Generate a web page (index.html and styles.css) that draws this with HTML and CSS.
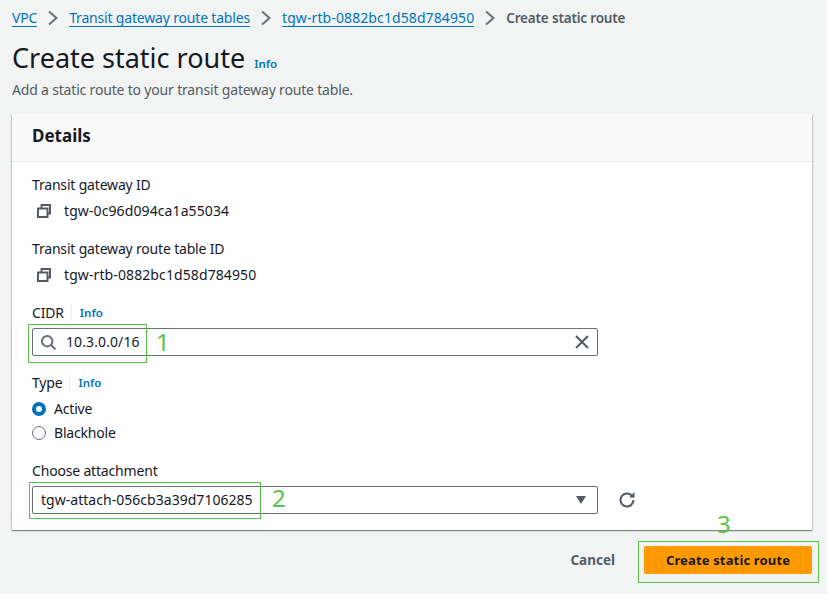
FILE: index.html
```html
<!DOCTYPE html>
<html lang="en">
<head>
    <meta charset="UTF-8">
    <meta name="viewport" content="width=device-width, initial-scale=1.0">
    <title>Create static route</title>
    <link rel="stylesheet" href="styles.css">
</head>
<body>
    <div class="page">
        <nav class="crumbs">
            <a href="#">VPC</a>
            <svg class="chevron" viewBox="0 0 10 16"><path d="M1 1.500l7.500 6.500-7.500 6.500"/></svg>
            <a href="#">Transit gateway route tables</a>
            <svg class="chevron" viewBox="0 0 10 16"><path d="M1 1.500l7.500 6.500-7.500 6.500"/></svg>
            <a class="res-id" href="#">tgw-rtb-0882bc1d58d784950</a>
            <svg class="chevron" viewBox="0 0 10 16"><path d="M1 1.500l7.500 6.500-7.500 6.500"/></svg>
            <span class="crumb-current">Create static route</span>
        </nav>

        <div class="title-row">
            <h1>Create static route</h1>
            <a class="info" href="#">Info</a>
        </div>
        <p class="subtitle">Add a static route to your transit gateway route table.</p>

        <section class="card">
            <h2 class="card-head">Details</h2>
            <div class="card-body">
                <div class="label">Transit gateway ID</div>
                <div class="copy-row">
                    <svg class="copy-icon" viewBox="0 0 14 14"><path d="M4.500 3.500V1h8.500v8.500h-2.500M1 4.500h9.500V13H1z"/></svg>
                    <span class="res-id">tgw-0c96d094ca1a55034</span>
                </div>

                <div class="label label-second">Transit gateway route table ID</div>
                <div class="copy-row">
                    <svg class="copy-icon" viewBox="0 0 14 14"><path d="M4.500 3.500V1h8.500v8.500h-2.500M1 4.500h9.500V13H1z"/></svg>
                    <span class="res-id">tgw-rtb-0882bc1d58d784950</span>
                </div>

                <div class="label label-info label-cidr">CIDR <a class="info-small" href="#">Info</a></div>
                <div class="field">
                    <svg class="search-icon" viewBox="0 0 15 15"><circle cx="6.200" cy="6.200" r="5.200"/><path d="M10 10l4.500 4.500"/></svg>
                    <span class="field-text res-id">10.3.0.0/16</span>
                    <svg class="clear-icon" viewBox="0 0 14 14"><path d="M1 1l12 12M13 1L1 13"/></svg>
                </div>

                <div class="label label-info label-type">Type <a class="info-small" href="#">Info</a></div>
                <div class="radio-row radio-first"><span class="radio radio-on"></span>Active</div>
                <div class="radio-row"><span class="radio"></span>Blackhole</div>

                <div class="label label-attach">Choose attachment</div>
                <div class="select-row">
                    <div class="field field-select">
                        <span class="select-text">tgw-attach-056cb3a39d7106285</span>
                        <span class="caret"></span>
                    </div>
                    <svg class="refresh-icon" viewBox="0 0 18 18"><path d="M15.500 9a6.500 6.500 0 1 1-2-4.700L15.500 6"/><path class="refresh-head" d="M16.500 1V6.500H11z"/></svg>
                </div>
            </div>
        </section>

        <div class="actions">
            <span class="cancel">Cancel</span>
            <button class="primary">Create static route</button>
        </div>

        <!-- green annotations drawn over the screenshot -->
        <div class="mark mark-cidr"></div>
        <div class="mark mark-attach"></div>
        <div class="mark mark-button"></div>
        <span class="mark-num num-1">1</span>
        <span class="mark-num num-2">2</span>
        <span class="mark-num num-3">3</span>
    </div>
</body>
</html>
```

FILE: styles.css
```css
html, body {
    margin: 0;
    height: 100%;
    overflow: hidden;
}
body {
    background-color: #f2f3f3;
    color: #16191f;
    font-family: "Noto Sans", "Open Sans", sans-serif;
    font-size: 14px;
    letter-spacing: -0.18px;
}
.page {
    position: relative;
    width: 827px;
    height: 594px;
    padding: 0 15px 0 12px;
    box-sizing: border-box;
}
a {
    color: #0073bb;
    text-decoration: none;
}
.res-id {
    letter-spacing: 0.1px;
}
.crumbs {
    display: flex;
    align-items: center;
    height: 18px;
    padding-top: 9px;
    line-height: 18px;
}
.crumbs a {
    border-bottom: 1px solid #0073bb;
    line-height: 17px;
}
.chevron {
    width: 10px;
    height: 16px;
    margin: 0 11px;
    fill: none;
    stroke: #687078;
    stroke-width: 2;
}
.crumb-current {
    color: #545b64;
    font-size: 13.500px;
    font-weight: 600;
}
.title-row {
    display: flex;
    align-items: baseline;
    margin-top: 15px;
    letter-spacing: 0;
}
h1 {
    margin: 0;
    font-size: 27px;
    font-weight: 400;
    line-height: 32px;
}
.info {
    margin-left: 9px;
    font-size: 11.500px;
    font-weight: 600;
}
.subtitle {
    margin: 7px 0 0;
    color: #545b64;
    line-height: 18px;
}
.card {
    margin-top: 15px;
    width: 800px;
    background-color: #fff;
    box-shadow: 0 1px 1px 0 rgba(0, 28, 36, 0.3), 1px 1px 1px 0 rgba(0, 28, 36, 0.15), -1px 1px 1px 0 rgba(0, 28, 36, 0.15);
}
.card-head {
    margin: 0;
    height: 48px;
    padding-left: 20px;
    box-sizing: border-box;
    background-color: #fafafa;
    border-bottom: 1px solid #eaeded;
    font-size: 17px;
    font-weight: 700;
    letter-spacing: 0;
    line-height: 44px;
}
.card-body {
    padding: 14px 20px 16px;
}
.label {
    line-height: 18px;
}
.label-second {
    margin-top: 20px;
}
.label-cidr {
    margin-top: 20px;
}
.label-type {
    margin-top: 18px;
}
.label-attach {
    margin-top: 20px;
}
.label-info {
    display: flex;
    align-items: center;
}
.info-small {
    margin-left: 7px;
    padding-left: 8px;
    border-left: 1px solid #eaeded;
    font-size: 11.500px;
    font-weight: 600;
    letter-spacing: 0;
}
.copy-row {
    display: flex;
    align-items: center;
    margin-top: 8px;
    height: 18px;
    padding-left: 5px;
}
.copy-row span, .field-text, .select-text {
    margin-bottom: 2px;
}
.copy-icon {
    width: 14px;
    height: 14px;
    margin-right: 13px;
    fill: none;
    stroke: #545b64;
    stroke-width: 2;
}
.field {
    display: flex;
    align-items: center;
    width: 566px;
    height: 28px;
    margin-top: 6px;
    border: 1px solid #687078;
    border-radius: 2px;
    box-sizing: border-box;
    padding: 0 8px;
}
.search-icon {
    width: 15px;
    height: 15px;
    fill: none;
    stroke: #687078;
    stroke-width: 2;
}
.field-text {
    margin-left: 10px;
    flex: 1;
}
.select-text {
    letter-spacing: 0.03px;
}
.clear-icon {
    width: 14px;
    height: 14px;
    fill: none;
    stroke: #545b64;
    stroke-width: 2;
}
.radio-row {
    display: flex;
    align-items: center;
    height: 18px;
    margin-top: 6px;
    line-height: 16px;
}
.radio-first {
    margin-top: 8px;
}
.radio {
    width: 14px;
    height: 14px;
    margin-right: 8px;
    border: 1px solid #687078;
    border-radius: 50%;
    box-sizing: border-box;
    background-color: #fff;
}
.radio-on {
    border: 4px solid #0073bb;
}
.select-row {
    display: flex;
    align-items: center;
}
.field-select {
    justify-content: space-between;
}
.caret {
    width: 0;
    height: 0;
    margin-right: 3px;
    border-left: 5px solid transparent;
    border-right: 5px solid transparent;
    border-top: 8px solid #545b64;
}
.refresh-icon {
    width: 18px;
    height: 18px;
    margin: 6px 0 0 20px;
    fill: none;
    stroke: #545b64;
    stroke-width: 2;
}
.refresh-head {
    fill: #545b64;
    stroke: none;
}
.actions {
    display: flex;
    align-items: center;
    justify-content: flex-end;
    width: 800px;
    margin-top: 16px;
}
.cancel {
    color: #545b64;
    font-size: 13.500px;
    font-weight: 700;
    letter-spacing: 0;
    margin-right: 29px;
}
.primary {
    width: 168px;
    height: 28px;
    background-color: #ff9900;
    border: 0;
    border-radius: 2px;
    color: #16191f;
    font-family: inherit;
    font-size: 13px;
    font-weight: 700;
    letter-spacing: 0.15px;
}
.mark {
    position: absolute;
    border: 1px solid #5ac24a;
    box-sizing: border-box;
}
.mark-cidr {
    left: 28px;
    top: 324px;
    width: 119px;
    height: 39px;
}
.mark-attach {
    left: 29px;
    top: 482px;
    width: 232px;
    height: 37px;
}
.mark-button {
    left: 638px;
    top: 541px;
    width: 181px;
    height: 42px;
}
.mark-num {
    position: absolute;
    color: #5ac24a;
    font-size: 24px;
    letter-spacing: 0;
    line-height: 28px;
}
.num-1 {
    left: 156px;
    top: 328px;
}
.num-2 {
    left: 272px;
    top: 484px;
}
.num-3 {
    left: 717px;
    top: 510px;
}
```
